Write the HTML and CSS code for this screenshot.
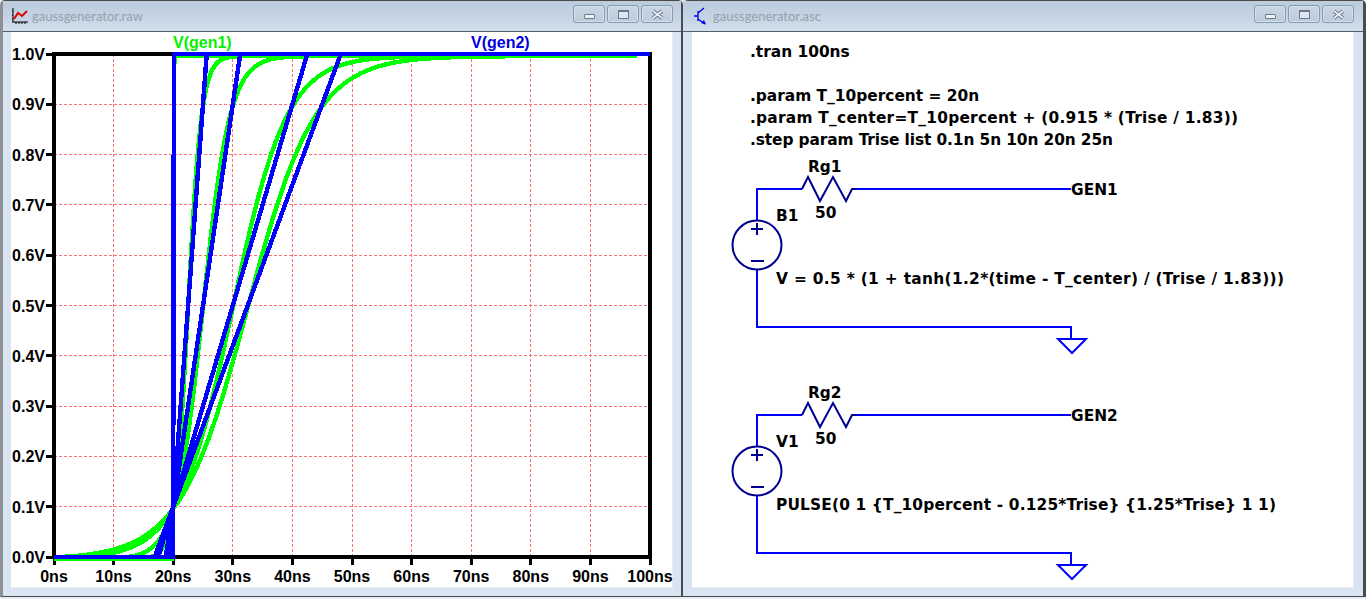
FILE: index.html
```html
<!DOCTYPE html>
<html lang="en">
<head>
    <meta charset="UTF-8">
    <title>LTspice - gaussgenerator</title>
    <link rel="stylesheet" href="styles.css">
</head>
<body>

<div class="desktop">

    <section class="window window-plot">
        <header class="titlebar">
            <svg class="app-icon" width="18" height="18" viewBox="0 0 18 18">
                <path d="M2 1V15M1 15H17M5 15v2M8 15v2M11 15v2M14 15v2M1 4h1M1 8h1M1 12h1" stroke="#000" fill="none"/>
                <path d="M3 12L7 6L11 9L16 4" stroke="#e00000" stroke-width="2" fill="none"/>
            </svg>
            <span class="title">gaussgenerator.raw</span>
            <div class="buttons">
                <span class="btn"><i class="glyph-min"></i></span>
                <span class="btn"><i class="glyph-max"></i></span>
                <span class="btn"><svg class="glyph-close" width="11" height="9" viewBox="0 0 11 9"><path class="x-edge" d="M1 1L10 8M10 1L1 8"/><path class="x-core" d="M1 1L10 8M10 1L1 8"/></svg></span>
            </div>
        </header>
        <div class="client">
            <svg id="plot" class="sheet" width="662" height="555" viewBox="11 32 662 555">
                <text class="trace-label green" x="173" y="48">V(gen1)</text>
                <text class="trace-label blue" x="471" y="48">V(gen2)</text>
            </svg>
        </div>
    </section>

    <section class="window window-schematic">
        <header class="titlebar">
            <svg class="app-icon" width="18" height="18" viewBox="0 0 18 18">
                <path d="M2 9H6M6 4V14M6 6L12 1M6 12L13 17" stroke="#0000e0" stroke-width="1.3" fill="none"/>
                <path d="M14 17.5L9 16L12 13Z" fill="#0000e0"/>
            </svg>
            <span class="title">gaussgenerator.asc</span>
            <div class="buttons">
                <span class="btn"><i class="glyph-min"></i></span>
                <span class="btn"><i class="glyph-max"></i></span>
                <span class="btn"><svg class="glyph-close" width="11" height="9" viewBox="0 0 11 9"><path class="x-edge" d="M1 1L10 8M10 1L1 8"/><path class="x-core" d="M1 1L10 8M10 1L1 8"/></svg></span>
            </div>
        </header>
        <div class="client">
            <svg class="sheet" width="662" height="555" viewBox="692 32 662 555">
                <text class="sch-text" x="750" y="57">.tran 100ns</text>
                <text class="sch-text" x="750" y="101">.param T_10percent = 20n</text>
                <text class="sch-text" x="750" y="123" textLength="488">.param T_center=T_10percent + (0.915 * (Trise / 1.83))</text>
                <text class="sch-text" x="750" y="145" textLength="363">.step param Trise list 0.1n 5n 10n 20n 25n</text>

                <!-- generator 1 -->
                <path class="wire" d="M757 220V189H802M855 189H1071M757 270V327H1071V339"/>
                <path class="symbol" d="M802 189L808 177L820 201L833 177L846 201L852 189H857"/>
                <circle class="symbol" cx="757" cy="245" r="24.5"/>
                <path class="symbol" d="M751 229H763M757 223V235M751 261H764"/>
                <path class="ground" d="M1058 339H1086L1072 353Z"/>
                <text class="sch-text" x="808" y="172">Rg1</text>
                <text class="sch-text" x="815" y="218">50</text>
                <text class="sch-text" x="776" y="221">B1</text>
                <text class="sch-text" x="776" y="284" textLength="508">V = 0.5 * (1 + tanh(1.2*(time - T_center) / (Trise / 1.83)))</text>
                <text class="sch-text" x="1071" y="195">GEN1</text>

                <!-- generator 2 -->
                <path class="wire" d="M757 446V415H802M855 415H1071M757 496V553H1071V565"/>
                <path class="symbol" d="M802 415L808 403L820 427L833 403L846 427L852 415H857"/>
                <circle class="symbol" cx="757" cy="471" r="24.5"/>
                <path class="symbol" d="M751 455H763M757 449V461M751 487H764"/>
                <path class="ground" d="M1058 565H1086L1072 579Z"/>
                <text class="sch-text" x="808" y="398">Rg2</text>
                <text class="sch-text" x="815" y="444">50</text>
                <text class="sch-text" x="776" y="447">V1</text>
                <text class="sch-text" x="776" y="510" textLength="500">PULSE(0 1 {T_10percent - 0.125*Trise} {1.25*Trise} 1 1)</text>
                <text class="sch-text" x="1071" y="421">GEN2</text>
            </svg>
        </div>
    </section>

</div>

<script src="script.js"></script>

</body>
</html>
```

FILE: styles.css
```css
body {
    margin: 0;
    background: #e6ecf3;
    overflow: hidden;
}

.desktop {
    display: flex;
    width: 1366px;
    height: 597px;
}

.window {
    box-sizing: border-box;
    width: 683px;
    display: flex;
    flex-direction: column;
    background: #d8e4f1;
    border: 1px solid #4b4b4b;
    border-radius: 5px 5px 0 0;
    padding: 0 8px 8px;
}

.window-plot {
    border-left: 3px solid #8d9195;
    border-right-width: 2px;
}

.window-schematic {
    border-left: 0;
    border-right-width: 3px;
    padding-left: 9px;
    padding-right: 9px;
}

.titlebar {
    flex: none;
    height: 30px;
    margin: 0 -8px;
    padding: 0 8px;
    display: flex;
    align-items: center;
    background: linear-gradient(180deg, #bdccdc 0%, #c6d5e5 60%, #d2dfed 100%);
    border-bottom: 1px solid #565d66;
}

.window-schematic .titlebar {
    margin: 0 -9px;
    padding: 0 9px;
}

.app-icon {
    flex: none;
    margin-top: 7px;
    margin-bottom: 8px;
    margin-right: 3px;
}

.title {
    font-family: Lato, sans-serif;
    font-size: 13px;
    color: #96a0aa;
}

.buttons {
    margin-left: auto;
    display: flex;
    gap: 2px;
    margin-top: -4px;
}

.btn {
    box-sizing: border-box;
    width: 32px;
    height: 18px;
    display: flex;
    align-items: center;
    justify-content: center;
    border: 1px solid #8a9bb0;
    border-radius: 3px;
    background: linear-gradient(180deg, #c9d6e4 0%, #bccbdb 100%);
    box-shadow: inset 0 0 0 1px #d3dfeb;
}

.glyph-min {
    display: block;
    box-sizing: border-box;
    width: 11px;
    height: 5px;
    margin-top: 4px;
    border: 1px solid #69788a;
    border-radius: 1px;
    background: #eef1f4;
}

.glyph-max {
    display: block;
    box-sizing: border-box;
    width: 11px;
    height: 9px;
    border: 1px solid #69788a;
    border-top-width: 2px;
    background: #dde5ee;
}

.glyph-close {
    overflow: visible;
}

.glyph-close path {
    fill: none;
}

.x-edge {
    stroke: #69788a;
    stroke-width: 3.6;
}

.x-core {
    stroke: #eef1f4;
    stroke-width: 1.6;
}

.client {
    flex: 1;
    background: #fff;
    border-right: 1px solid #e8ecf0;
    border-bottom: 1px solid #e8ecf0;
}

.sheet {
    display: block;
    font-family: "Liberation Sans", Arial, sans-serif;
    font-weight: bold;
}

.grid-line {
    stroke: #ff7070;
    stroke-width: 1;
    stroke-dasharray: 3 2;
    shape-rendering: crispEdges;
}

.axis {
    fill: none;
    stroke: #000;
    stroke-width: 4;
    shape-rendering: crispEdges;
}

.tick {
    stroke: #000;
    stroke-width: 3;
    shape-rendering: crispEdges;
}

.axis-label {
    font-size: 16px;
    fill: #000;
}

.trace {
    fill: none;
    stroke-width: 4.4;
    shape-rendering: crispEdges;
}

.trace-green {
    stroke: #00ff00;
}

.trace-blue {
    stroke: #0000ff;
}

.trace-label {
    font-size: 16px;
}

.green {
    fill: #00f000;
}

.blue {
    fill: #0000e0;
}

.sch-text {
    font-family: "DejaVu Sans", Verdana, sans-serif;
    font-size: 15.4px;
    fill: #000;
}

.wire {
    fill: none;
    stroke: #0000ff;
    stroke-width: 2;
    shape-rendering: crispEdges;
}

.symbol {
    fill: none;
    stroke: #000090;
    stroke-width: 2;
}

.ground {
    fill: none;
    stroke: #0000ff;
    stroke-width: 2;
}
```

FILE: script.js
```js
// plot area, in page pixels
const X0 = 54, X1 = 650, Y0 = 557, Y1 = 54;
const STEPS = [0.1, 5, 10, 20, 25];
const SVG_NS = 'http://www.w3.org/2000/svg';
const plot = document.getElementById('plot');

function px(t) {
    return X0 + (X1 - X0) * t / 100;
}

function py(v) {
    return Y0 + (Y1 - Y0) * v;
}

function add(tag, attrs, text) {
    const el = document.createElementNS(SVG_NS, tag);
    for (const k in attrs) el.setAttribute(k, attrs[k]);
    if (text) el.textContent = text;
    plot.appendChild(el);
}

// grid and ticks
for (let i = 1; i < 10; i++) {
    add('line', { class: 'grid-line', x1: px(i * 10), x2: px(i * 10), y1: Y1, y2: Y0 });
    add('line', { class: 'grid-line', x1: X0, x2: X1, y1: py(i / 10), y2: py(i / 10) });
}
for (let i = 0; i <= 10; i++) {
    add('line', { class: 'tick', x1: px(i * 10), x2: px(i * 10), y1: Y0, y2: Y0 + 8 });
    add('line', { class: 'tick', x1: X0 - 8, x2: X0, y1: py(i / 10), y2: py(i / 10) });
    add('text', { class: 'axis-label', x: px(i * 10), y: Y0 + 25, 'text-anchor': 'middle' }, (i * 10) + 'ns');
    add('text', { class: 'axis-label', x: 45, y: py(i / 10) + 6, 'text-anchor': 'end' }, (i / 10).toFixed(1) + 'V');
}
add('path', { class: 'axis', d: `M${X0} ${Y0}V${Y1}H${X1}V${Y0}Z` });

// V(gen1): tanh edge for every stepped Trise
STEPS.forEach(tr => {
    const center = 20 + 0.915 * tr / 1.83;
    let d = '';
    for (let t = 0; t <= 97.8; t += 0.1) {
        const v = 0.5 * (1 + Math.tanh(1.2 * (t - center) / (tr / 1.83)));
        d += (d ? 'L' : 'M') + px(t).toFixed(1) + ' ' + (py(v) + 2).toFixed(1);
    }
    add('path', { class: 'trace trace-green', d });
});

// V(gen2): the pulse source
STEPS.forEach(tr => {
    const start = 20 - 0.125 * tr;
    const end = start + 1.25 * tr;
    add('path', { class: 'trace trace-blue', d: `M${px(0)} ${py(0)}L${px(start)} ${py(0)}L${px(end)} ${py(1)}L${px(100)} ${py(1)}` });
});

// labels sit above the traces in the picture order
plot.querySelectorAll('.trace-label').forEach(el => plot.appendChild(el));
```
